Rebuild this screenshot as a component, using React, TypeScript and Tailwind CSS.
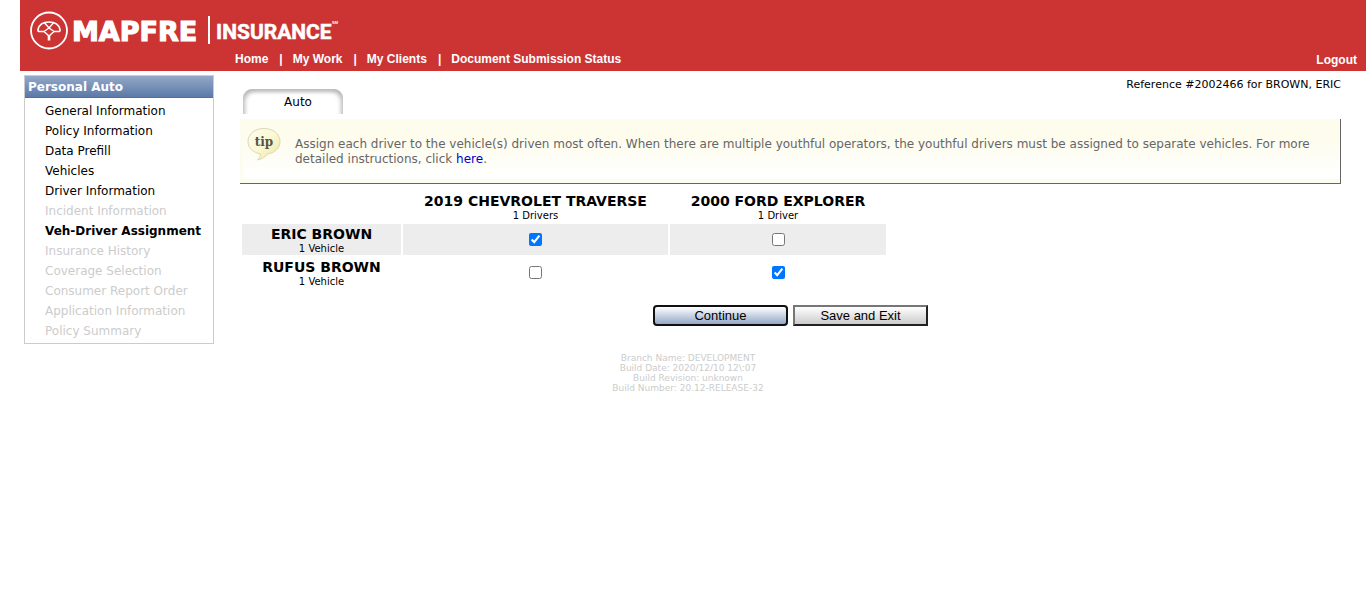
import { useState } from "react";

const NAV = ["Home", "My Work", "My Clients", "Document Submission Status"];

type Step = { label: string; state: "open" | "current" | "locked" };

const STEPS: Step[] = [
  { label: "General Information", state: "open" },
  { label: "Policy Information", state: "open" },
  { label: "Data Prefill", state: "open" },
  { label: "Vehicles", state: "open" },
  { label: "Driver Information", state: "open" },
  { label: "Incident Information", state: "locked" },
  { label: "Veh-Driver Assignment", state: "current" },
  { label: "Insurance History", state: "locked" },
  { label: "Coverage Selection", state: "locked" },
  { label: "Consumer Report Order", state: "locked" },
  { label: "Application Information", state: "locked" },
  { label: "Policy Summary", state: "locked" },
];

const VEHICLES = [
  { name: "2019 CHEVROLET TRAVERSE", note: "1 Drivers", width: "w-[265px]" },
  { name: "2000 FORD EXPLORER", note: "1 Driver", width: "w-[216px]" },
];

const DRIVERS = [
  { name: "ERIC BROWN", note: "1 Vehicle", shade: "bg-[#ededed]" },
  { name: "RUFUS BROWN", note: "1 Vehicle", shade: "bg-white" },
];

function Logo() {
  return (
    <svg className="block h-[44px] w-[320px]" viewBox="0 0 320 44" role="img" aria-label="MAPFRE Insurance">
      <g fill="none" stroke="#fff" strokeLinejoin="round">
        <circle cx="19" cy="22.5" r="18" strokeWidth="1.8" />
        <path d="M14 23.5H9.5Q7.500 23.500 8 21.500C9 17 13 14 19 14S29 17 30 21.500Q30.500 23.500 28.500 23.500H24" strokeWidth="1.7" />
        <path d="M14.500 14.800L19 20L23.500 14.800M14 23.500L19 20L24 23.500L19 28Z" strokeWidth="1.4" />
        <path d="M19 27V32.5" strokeWidth="2.6" />
      </g>
      <text x="42" y="33" fill="#fff" stroke="#fff" strokeWidth="1.2" className="font-['DejaVu_Sans',sans-serif] text-[27px] font-bold">
        MAPFRE
      </text>
      <path d="M179 8V36" stroke="#fff" strokeWidth="2" />
      <text x="186" y="31" fill="#fff" stroke="#fff" strokeWidth="0.5" className="font-['Roboto',sans-serif] text-[21px] font-bold">
        INSURANCE
      </text>
      <text x="302" y="16" fill="#fff" className="font-['Liberation_Sans',sans-serif] text-[4px] font-bold">
        SM
      </text>
    </svg>
  );
}

function TipBubble() {
  return (
    <svg className="block h-[34px] w-[34px] shrink-0" viewBox="0 0 34 34" role="img" aria-label="tip">
      <defs>
        <linearGradient id="bubble" x1="0" y1="0" x2="1" y2="1">
          <stop offset="0" stopColor="#fdfdf0" />
          <stop offset="0.5" stopColor="#fbf8d2" />
          <stop offset="1" stopColor="#ece49c" />
        </linearGradient>
      </defs>
      <path
        d="M17 1.5C8 1.5 1 7 1 14.5C1 21 6 25.3 13.500 27C13.500 29.500 12 31.500 10.500 33C15 32 18.500 30 20.500 27C28 26 33 21 33 14.500C33 7 26 1.500 17 1.500Z"
        fill="url(#bubble)"
        stroke="#dcd7b5"
      />
      <text x="17" y="19" textAnchor="middle" fill="#55534a" className="font-['DejaVu_Serif',serif] text-[12px] font-bold">
        tip
      </text>
    </svg>
  );
}

export default function App() {
  const [assigned, setAssigned] = useState([
    [true, false],
    [false, true],
  ]);

  const toggle = (d: number, v: number) =>
    setAssigned((rows) => rows.map((row, i) => row.map((on, j) => (i === d && j === v ? !on : on))));

  return (
    <div className="min-h-screen bg-white pl-5 font-['DejaVu_Sans',sans-serif] text-[12px] text-black">
      <header className="bg-[#cc3333] pt-2 pr-[9px] pl-[10px] font-['Liberation_Sans',sans-serif] font-bold text-white">
        <Logo />
        <div className="flex h-[19px] items-start justify-between pl-[205px] leading-[14px]">
          <nav className="flex">
            {NAV.map((label, i) => (
              <span key={label} className="flex">
                {i > 0 && <span className="pr-[10px] pl-[11px]">|</span>}
                <a href="#">{label}</a>
              </span>
            ))}
          </nav>
          <a href="#" className="leading-4">
            Logout
          </a>
        </div>
      </header>

      <div className="flex items-start pl-1">
        <aside className="mt-1 w-[190px] shrink-0 border border-[#cccccc]">
          <h2 className="h-[22px] border-b border-[#5a6f93] bg-linear-to-b from-[#94a8c8] to-[#5b7aa8] pl-[3px] leading-[22px] font-bold text-white">
            Personal Auto
          </h2>
          <ul className="pt-[3px] pb-[2px] pl-5 leading-5">
            {STEPS.map((step) => (
              <li key={step.label}>
                {step.state === "locked" ? (
                  <span className="text-[#cccccc]">{step.label}</span>
                ) : (
                  <a href="#" className={step.state === "current" ? "font-bold" : ""}>
                    {step.label}
                  </a>
                )}
              </li>
            ))}
          </ul>
        </aside>

        <main className="min-w-0 flex-1 pr-[25px] pl-[26px]">
          <div className="flex h-[48px] items-start justify-between pl-[3px]">
            <a
              href="#"
              className="mt-[18px] block h-[25px] w-[100px] rounded-t-[9px] bg-white pt-[4px] pl-[10px] text-center leading-[18px] shadow-[inset_4px_4px_4px_-2px_#bbbbbb,inset_-4px_4px_4px_-2px_#bbbbbb]"
            >
              Auto
            </a>
            <p className="mt-[7px] text-[11px] leading-[14px]">Reference #2002466 for BROWN, ERIC</p>
          </div>

          <section className="border-r border-b border-[#666666] bg-[#fcfcf0] pb-1 pl-[3px]">
            <div className="flex h-[60px] items-start bg-linear-to-b from-[#fdfced] from-30% to-white pt-2 pr-5 pl-1">
              <TipBubble />
              <p className="mt-[10px] ml-[14px] leading-[15px] text-[#666666]">
                Assign each driver to the vehicle(s) driven most often. When there are multiple youthful operators, the
                youthful drivers must be assigned to separate vehicles. For more detailed instructions, click{" "}
                <a href="#" className="text-[#0000cc]">
                  here
                </a>
                .
              </p>
            </div>
          </section>

          <table className="mt-[6px] border-separate border-spacing-[2px] text-center">
            <thead>
              <tr className="h-[30px]">
                <td className="w-[159px] p-0" />
                {VEHICLES.map((v) => (
                  <th key={v.name} scope="col" className={`${v.width} p-0 text-[10px] font-normal`}>
                    <span className="block text-[14px] leading-[17px] font-bold">{v.name}</span>
                    <span className="block leading-[12px]">{v.note}</span>
                  </th>
                ))}
              </tr>
            </thead>
            <tbody>
              {DRIVERS.map((d, i) => (
                <tr key={d.name} className={`h-[31px] ${d.shade}`}>
                  <th scope="row" className="p-0 text-[10px] font-normal">
                    <span className="block text-[14px] leading-[18px] font-bold">{d.name}</span>
                    <span className="block leading-[12px]">{d.note}</span>
                  </th>
                  {VEHICLES.map((v, j) => (
                    <td key={v.name} className="p-0">
                      <input
                        type="checkbox"
                        aria-label={`Assign ${d.name} to ${v.name}`}
                        checked={assigned[i][j]}
                        onChange={() => toggle(i, j)}
                        className="mx-auto block h-[13px] w-[13px] accent-[#0075ff]"
                      />
                    </td>
                  ))}
                </tr>
              ))}
            </tbody>
          </table>

          <div className="mt-[15px] flex justify-center gap-[5px] font-['Liberation_Sans',sans-serif] text-[13px]">
            <button
              type="button"
              className="h-[21px] w-[135px] rounded-[4px] border-2 border-[#101010] bg-linear-to-b from-white to-[#94a8c8] leading-[17px]"
            >
              Continue
            </button>
            <button
              type="button"
              className="h-[21px] w-[135px] border-2 border-t-[#767676] border-r-[#212121] border-b-[#212121] border-l-[#767676] bg-linear-to-b from-white to-[#cccccc] leading-[17px]"
            >
              Save and Exit
            </button>
          </div>
        </main>
      </div>

      <footer className="pt-[9px] pr-[10px] text-center text-[9px] leading-[10px] text-[#cccccc]">
        <p>Branch Name: DEVELOPMENT</p>
        <p>Build Date: 2020/12/10 12\:07</p>
        <p>Build Revision: unknown</p>
        <p>Build Number: 20.12-RELEASE-32</p>
      </footer>
    </div>
  );
}
